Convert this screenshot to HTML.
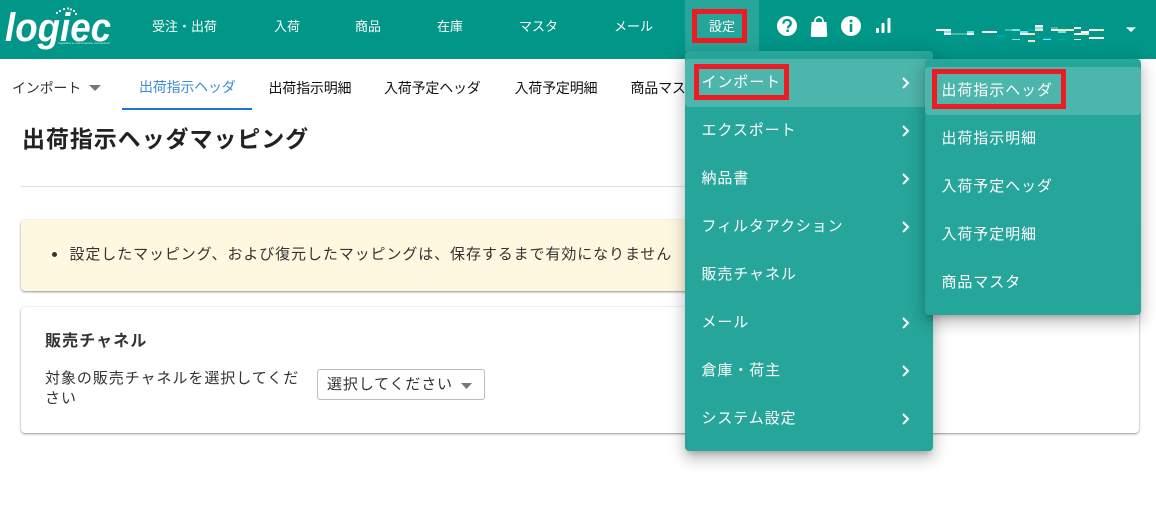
<!DOCTYPE html>
<html lang="ja"><head><meta charset="utf-8"><title>出荷指示ヘッダマッピング</title>
<style>
html,body{margin:0;padding:0;background:#fff}
body{width:1156px;height:522px;position:relative;overflow:hidden;font-family:"Liberation Sans","Noto Sans CJK JP",sans-serif;color:#212121;font-size:14px}
.a{position:absolute;white-space:nowrap}
#hd{left:0;top:0;width:1156px;height:59px;background:#009688}
.n{top:18px;line-height:18px;font-size:13px;letter-spacing:0;color:#fff}
.t{top:78px;line-height:20px;font-size:14px;letter-spacing:-.2px;color:#111}
.menu{background:#26a69a;border-radius:4px;box-shadow:0 5px 6px -3px rgba(0,0,0,.2),0 8px 14px 1px rgba(0,0,0,.14),0 3px 18px 2px rgba(0,0,0,.12)}
.m{color:#fff;font-size:15px;letter-spacing:.9px;line-height:20px;left:16.500px}
.s{left:16.500px;color:#fff;font-size:15px;letter-spacing:.9px;line-height:20px}
.hl{background:#4db6ac;border-radius:4px}
.rb{border:5px solid #ed1c24;box-sizing:border-box}
.card{left:21px;width:1118px;border-radius:4px;box-shadow:0 1px 2px rgba(0,0,0,.4),0 0 2px rgba(0,0,0,.08)}
</style></head><body>
<div class="a" id="hd"></div>
<svg class="a" style="left:0;top:5px" width="120" height="45" viewBox="0 0 120 45">
<g fill="#fff"><circle cx="57" cy="8" r="1.1"/><circle cx="60" cy="6" r="1.1"/><circle cx="64" cy="4" r="1.1"/><circle cx="68" cy="3.500" r="1.1"/><circle cx="71" cy="4.500" r="1.1"/><circle cx="74" cy="6" r="1.1"/><circle cx="76" cy="9" r="1.1"/></g>
<text x="5" y="36" font-family="Liberation Sans" font-weight="700" font-style="italic" font-size="40" fill="#fff" textLength="106" lengthAdjust="spacingAndGlyphs">logiec</text>
<text x="58" y="39" font-family="Liberation Sans" font-size="3" fill="#cfe" textLength="52" lengthAdjust="spacingAndGlyphs">logistics e-commerce connector</text>
</svg>
<div class="a n" style="left:152px">受注・出荷</div>
<div class="a n" style="left:274px">入荷</div>
<div class="a n" style="left:355px">商品</div>
<div class="a n" style="left:437px">在庫</div>
<div class="a n" style="left:519px">マスタ</div>
<div class="a n" style="left:614px">メール</div>
<div class="a" style="left:685px;top:0;width:74px;height:51px;background:#26a69a"></div>
<div class="a n" style="left:709px">設定</div>
<div class="a rb" style="left:692px;top:9px;width:55px;height:34px"></div>
<svg class="a" style="left:770px;top:10px" width="130" height="35" viewBox="0 0 130 35">
<circle cx="17" cy="16" r="10" fill="#fff"/>
<path d="M13.300 13.600c0-2.200 1.600-3.600 3.800-3.600s3.700 1.300 3.700 3.200c0 2.600-3 2.800-3 5.200" fill="none" stroke="#009688" stroke-width="2.300"/>
<rect x="16.400" y="19.600" width="2.400" height="2.400" fill="#009688"/>
<path d="M41.500 12h15l.7 13.500a1.500 1.500 0 0 1-1.500 1.500h-13.400a1.500 1.500 0 0 1-1.500-1.500z" fill="#fff"/>
<path d="M45 14V11a4 4 0 0 1 8 0V14" fill="none" stroke="#fff" stroke-width="1.800"/>
<circle cx="81" cy="16" r="10" fill="#fff"/>
<rect x="79.700" y="9.800" width="2.600" height="2.600" fill="#009688"/><rect x="79.700" y="14" width="2.600" height="8" fill="#009688"/>
<rect x="106" y="18" width="3" height="5" rx="1" fill="#fff"/><rect x="111.500" y="13" width="3" height="10" rx="1" fill="#fff"/><rect x="117.500" y="8" width="3" height="15" rx="1" fill="#fff"/>
</svg>
<svg class="a" style="left:930px;top:15px" width="215" height="35" viewBox="0 0 645 105">
<g fill="#fff"><rect x="18" y="42" width="45" height="6"/><rect x="42" y="54" width="21" height="6"/><rect x="111" y="54" width="21" height="6"/><rect x="156" y="48" width="45" height="6"/><rect x="270" y="54" width="24" height="6"/><rect x="315" y="30" width="24" height="6"/><rect x="363" y="42" width="21" height="6"/><rect x="432" y="36" width="21" height="6"/><rect x="453" y="48" width="24" height="6"/><rect x="477" y="42" width="24" height="6"/><rect x="477" y="66" width="45" height="6"/><rect x="432" y="54" width="21" height="6"/></g>
<g fill="#7fe0ea"><rect x="42" y="48" width="21" height="6"/><rect x="111" y="48" width="21" height="6"/><rect x="246" y="42" width="24" height="6"/><rect x="270" y="48" width="24" height="6"/><rect x="315" y="36" width="24" height="6"/><rect x="246" y="72" width="24" height="3"/><rect x="339" y="72" width="24" height="3"/><rect x="384" y="48" width="24" height="6"/></g>
<g fill="#f3e6bd"><rect x="294" y="54" width="21" height="6"/><rect x="315" y="42" width="24" height="6"/><rect x="384" y="42" width="48" height="6"/><rect x="453" y="54" width="24" height="6"/><rect x="501" y="42" width="21" height="6"/><rect x="294" y="75" width="21" height="6"/><rect x="432" y="72" width="21" height="3"/></g>
<g fill="#4db6ac"><rect x="63" y="54" width="48" height="6"/><rect x="225" y="42" width="21" height="6"/><rect x="363" y="36" width="21" height="6"/></g>
<g fill="#00a3b5"><rect x="201" y="60" width="24" height="6"/><rect x="294" y="42" width="21" height="6"/><rect x="339" y="66" width="24" height="6"/><rect x="384" y="72" width="24" height="3"/></g>
<path d="M588 37h30l-15 14z" fill="#fff"/>
</svg>

<div class="a" style="left:12px;top:78px;line-height:20px;font-size:14px;letter-spacing:-.2px;color:#333">インポート</div>
<svg class="a" style="left:89px;top:85px" width="12" height="7"><path d="M0 0h12L6 6z" fill="#777"/></svg>
<div class="a t" style="left:139px;top:77px;color:#3d8ddc">出荷指示ヘッダ</div>
<div class="a" style="left:122px;top:108px;width:130px;height:2px;background:#1976d2"></div>
<div class="a t" style="left:268.500px">出荷指示明細</div>
<div class="a t" style="left:384px">入荷予定ヘッダ</div>
<div class="a t" style="left:514.500px">入荷予定明細</div>
<div class="a t" style="left:630.500px">商品マスタ</div>

<div class="a" style="left:22px;top:122px;line-height:34px;font-size:23px;font-weight:700;letter-spacing:.92px;color:#222">出荷指示ヘッダマッピング</div>
<div class="a" style="left:21px;top:186px;width:1118px;height:1px;background:#e0e0e0"></div>

<div class="a card" style="top:220px;height:71px;background:#fff8e1"></div>
<div class="a" style="left:52px;top:252px;width:5px;height:5px;border-radius:50%;background:#333"></div>
<div class="a" style="left:69.500px;top:245px;line-height:20px;font-size:15px;letter-spacing:.9px;color:#333">設定したマッピング、および復元したマッピングは、保存するまで有効になりません</div>

<div class="a card" style="top:307px;height:126px;background:#fff"></div>
<div class="a" style="left:45px;top:332px;line-height:20px;font-size:16px;font-weight:700;letter-spacing:1.1px;color:#333">販売チャネル</div>
<div class="a" style="left:45px;top:369px;line-height:20px;font-size:15px;letter-spacing:.95px;color:#333">対象の販売チャネルを選択してくだ<br>さい</div>
<div class="a" style="left:317px;top:369px;width:168px;height:31px;box-sizing:border-box;border:1px solid #bdbdbd;border-radius:3px;background:#fff"></div>
<div class="a" style="left:327px;top:375px;line-height:20px;font-size:15px;letter-spacing:.85px;color:#333">選択してください</div>
<svg class="a" style="left:461px;top:383px" width="11" height="6"><path d="M0 0h11L5.500 6z" fill="#777"/></svg>

<div class="a menu" style="left:685px;top:51px;width:248px;height:400px">
<div class="a hl" style="left:0;top:8px;width:248px;height:48px"></div>
<div class="a m" style="top:22px">インポート</div>
<div class="a m" style="top:70px">エクスポート</div>
<div class="a m" style="top:118px">納品書</div>
<div class="a m" style="top:166px">フィルタアクション</div>
<div class="a m" style="top:214px">販売チャネル</div>
<div class="a m" style="top:262px">メール</div>
<div class="a m" style="top:310px">倉庫・荷主</div>
<div class="a m" style="top:358px">システム設定</div>
<svg class="a" style="left:216px;top:25px" width="12" height="360" fill="none" stroke="#fff" stroke-width="2">
<path d="M2 2l5 5-5 5M2 50l5 5-5 5M2 98l5 5-5 5M2 146l5 5-5 5M2 242l5 5-5 5M2 290l5 5-5 5M2 338l5 5-5 5"/>
</svg>
</div>
<div class="a rb" style="left:694px;top:64px;width:95px;height:36px"></div>

<div class="a menu" style="left:925px;top:59px;width:216px;height:256px">
<div class="a hl" style="left:0;top:8px;width:216px;height:48px"></div>
<div class="a s" style="top:22px">出荷指示ヘッダ</div>
<div class="a s" style="top:70px">出荷指示明細</div>
<div class="a s" style="top:118px">入荷予定ヘッダ</div>
<div class="a s" style="top:166px">入荷予定明細</div>
<div class="a s" style="top:214px">商品マスタ</div>
</div>
<div class="a rb" style="left:932px;top:69px;width:134px;height:40px"></div>
</body></html>
